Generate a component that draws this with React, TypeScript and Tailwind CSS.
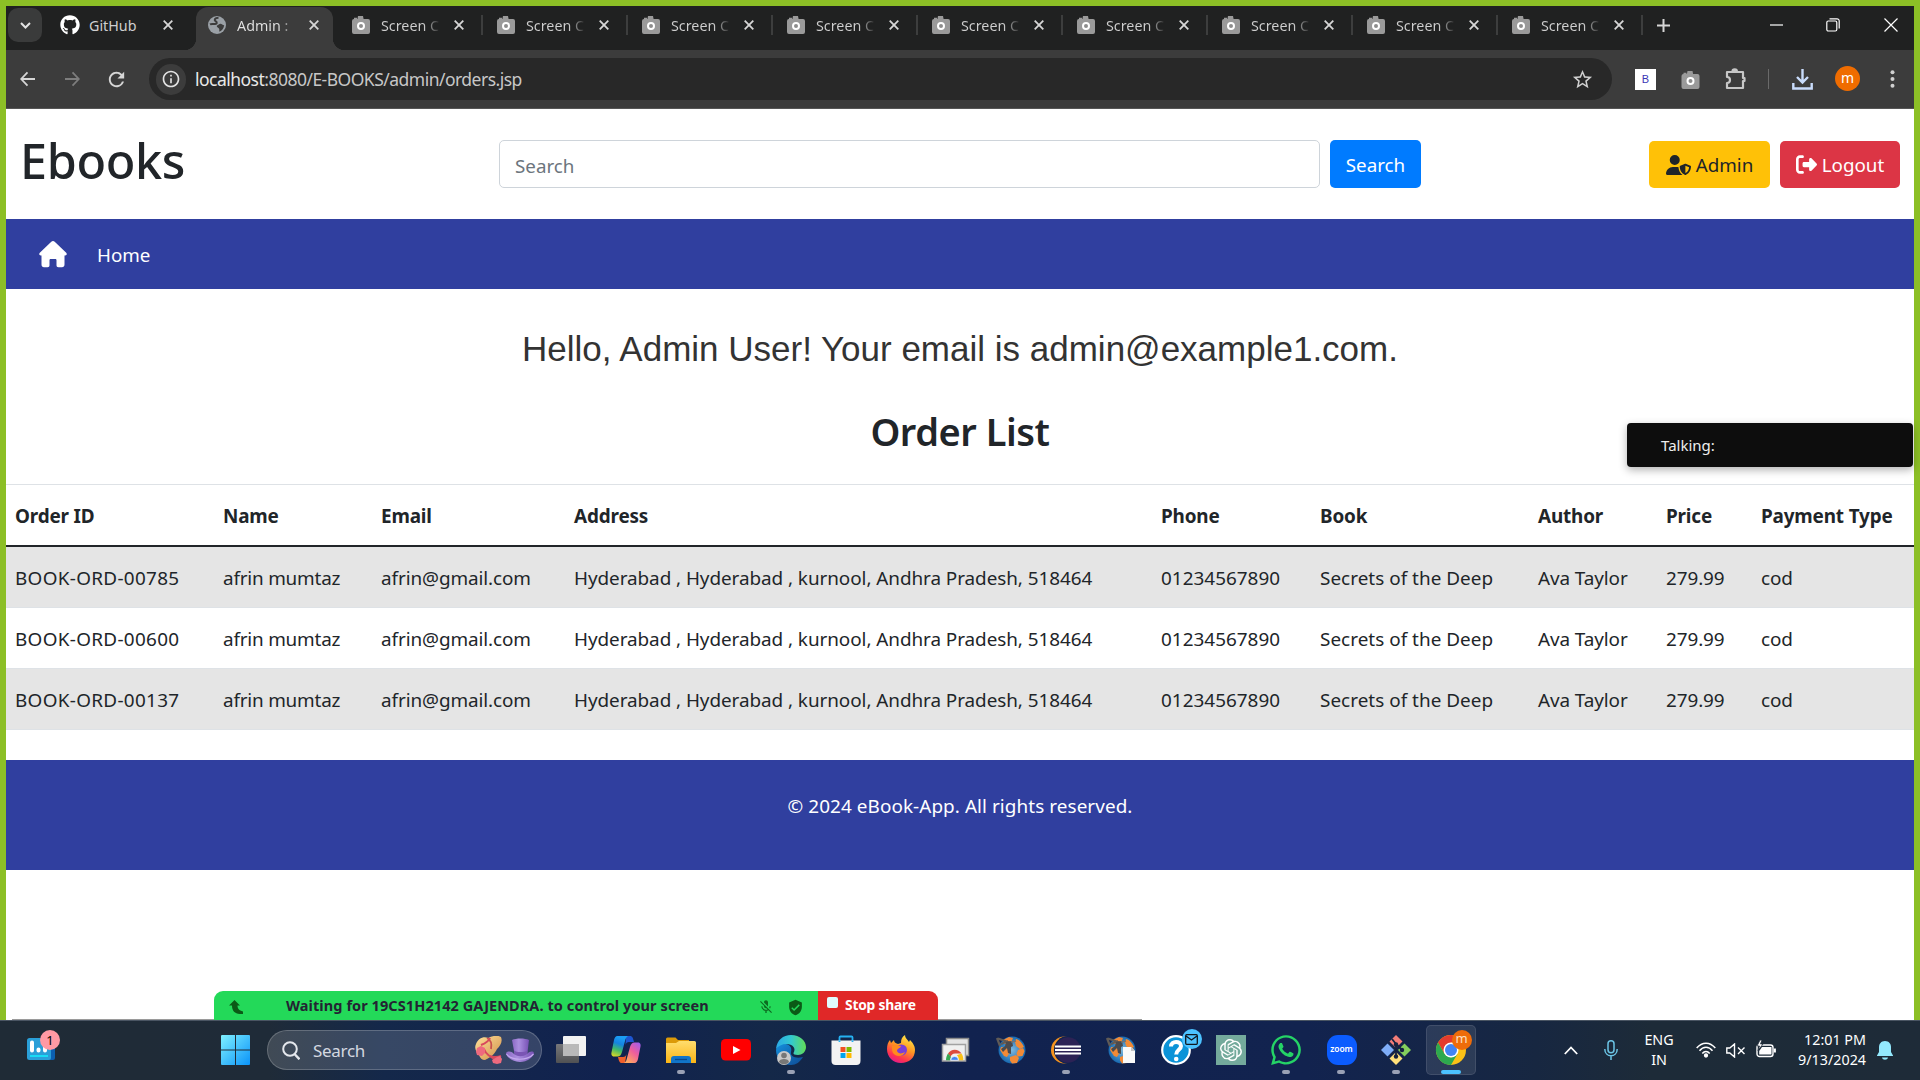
import React from "react";
import { FaGithub, FaWhatsapp, FaUserShield, FaRightFromBracket } from "react-icons/fa6";
import { SiOpenai } from "react-icons/si";
import { MdInfoOutline, MdStarOutline, MdVerifiedUser, MdMicOff, MdRefresh } from "react-icons/md";

type P = { className?: string; children?: React.ReactNode };

const Close = ({ className = "" }: P) => (
  <svg className={`h-[10px] w-[10px] shrink-0 ${className}`} viewBox="0 0 10 10" stroke="#d6d6d6" strokeWidth="1.8">
    <path d="M.7.7l8.6 8.6M9.3.7L.7 9.3" />
  </svg>
);

const Camera = ({ className = "" }: P) => (
  <svg className={`shrink-0 ${className}`} viewBox="0 0 18 18">
    <path d="M6 0h5l.6 3H16a2 2 0 0 1 2 2v11a2 2 0 0 1-2 2H2a2 2 0 0 1-2-2V5a2 2 0 0 1 2-2h0V1.8h3V3h.4z" fill="#9a9a9a" />
    <circle cx="9" cy="10" r="3" fill="#8d8d8d" stroke="#fff" strokeWidth="2" />
  </svg>
);

const Globe = () => (
  <svg className="h-[18px] w-[18px] shrink-0" viewBox="0 0 18 18">
    <circle cx="9" cy="9" r="9" fill="#9aa0a6" />
    <path d="M10.500 1.800C6.500 2 6 4 7.500 5.200c2 1.200 1.500 2.600-.3 2.800-1.800.2-3.600-.6-5.200.4" fill="none" stroke="#3c3c3c" strokeWidth="2" />
    <path d="M9 9.500c2-.8 2.600-2 4.200-1.600 1.400.4 1.600 1.400 3 1.200-.2 3.500-2.400 5.600-4.700 6.600-.6-1.500.4-2.500-.8-3.500-1.200-.8-2.500-1.400-1.700-2.700z" fill="#3c3c3c" />
  </svg>
);

const ScreenTab = () => (
  <div className="flex h-full w-[145px] shrink-0 items-center pl-[14px]">
    <Camera className="h-[20px] w-[18px]" />
    <span className="mt-[2px] ml-[11px] w-[61px] bg-gradient-to-r from-[#cfcfcf] from-70% to-transparent to-98% bg-clip-text text-[14.3px] whitespace-nowrap text-transparent">
      Screen C
    </span>
    <Close className="ml-[12px]" />
    <span className="ml-auto h-[20px] w-[2px] bg-[#3d3e3e]" />
  </div>
);

const TabStrip = () => (
  <div className="flex h-[44px] shrink-0 items-center bg-[#202121] pl-[2px]">
    <div className="mb-[6px] flex h-[34px] w-[34px] items-center justify-center rounded-[10px] bg-[#3a3b3b]">
      <svg className="h-[7px] w-[11px]" viewBox="0 0 11 7" fill="none" stroke="#e3e3e3" strokeWidth="2">
        <path d="M1 1l4.500 4.500L10 1" />
      </svg>
    </div>
    <div className="mb-[6px] flex h-[38px] w-[154px] items-center pl-[18px]">
      <FaGithub className="h-[20px] w-[20px] text-white" />
      <span className="mt-[2px] ml-[9px] text-[14.3px] text-[#cfcfcf]">GitHub</span>
      <Close className="ml-[27px]" />
    </div>
    <div className="relative flex h-full w-[137px] items-center">
      <div className="absolute right-0 bottom-0 left-0 h-[43px] rounded-t-[12px] bg-[#3c3c3c]" />
      <div className="absolute bottom-0 -left-3 h-3 w-3 bg-[radial-gradient(circle_at_0_0,transparent_12px,#3c3c3c_12.500px)]" />
      <div className="absolute -right-3 bottom-0 h-3 w-3 bg-[radial-gradient(circle_at_100%_0,transparent_12px,#3c3c3c_12.500px)]" />
      <div className="relative mb-[6px] flex items-center pl-[12px]">
        <Globe />
        <span className="mt-[2px] ml-[11px] w-[60px] bg-gradient-to-r from-[#e3e3e3] from-70% to-transparent to-100% bg-clip-text text-[14.3px] whitespace-nowrap text-transparent">
          Admin :
        </span>
        <Close className="ml-[12px]" />
      </div>
    </div>
    <div className="mb-[6px] ml-[5px] flex h-full items-center">
      {Array.from({ length: 9 }, (_, i) => (
        <ScreenTab key={i} />
      ))}
    </div>
    <svg className="mb-[6px] ml-[14px] h-[13px] w-[13px]" viewBox="0 0 13 13" stroke="#d6d6d6" strokeWidth="2">
      <path d="M6.500 0v13M0 6.500h13" />
    </svg>
    <div className="mb-[7px] ml-auto flex items-center pr-[16px]">
      <svg className="h-[14px] w-[13px]" viewBox="0 0 13 14" stroke="#fff" strokeWidth="1.200">
        <path d="M0 7h13" />
      </svg>
      <svg className="ml-[43px] h-[14px] w-[14px]" viewBox="0 0 14 14" fill="none" stroke="#fff" strokeWidth="1.200">
        <rect x=".8" y="3" width="10" height="10" rx="1.500" />
        <path d="M3.500.800h7.500a2.200 2.200 0 0 1 2.200 2.200v7.500" />
      </svg>
      <svg className="ml-[44px] h-[14px] w-[14px]" viewBox="0 0 14 14" stroke="#fff" strokeWidth="1.200">
        <path d="M.5.5l13 13M13.500.5l-13 13" />
      </svg>
    </div>
  </div>
);

const Toolbar = () => (
  <div className="flex h-[59px] shrink-0 items-center border-b border-[#565656] bg-[#3c3c3c] pl-[14px]">
    <svg className="h-[16px] w-[15px]" viewBox="0 0 16 16" fill="none" stroke="#d6d6d6" strokeWidth="1.900">
      <path d="M16 8H1.500M8 1L1.300 8 8 15" />
    </svg>
    <svg className="ml-[30px] h-[16px] w-[15px]" viewBox="0 0 16 16" fill="none" stroke="#7d7d7d" strokeWidth="1.900">
      <path d="M0 8h14.500M8 1l6.700 7L8 15" />
    </svg>
    <MdRefresh className="ml-[25px] h-[23px] w-[23px] text-[#d6d6d6]" />
    <div className="ml-[21px] flex h-[42px] w-[1463px] items-center rounded-full bg-[#282828] pl-[7px]">
      <div className="flex h-[31px] w-[30px] items-center justify-center rounded-full bg-[#3c3c3c]">
        <MdInfoOutline className="h-[20px] w-[20px] text-[#e3e3e3]" />
      </div>
      <span className="mt-px ml-[9px] text-[17.500px] tracking-[-0.520px] text-[#c7c7c7]">
        <span className="text-[#e8e8e8]">localhost</span>:8080/E-BOOKS/admin/orders.jsp
      </span>
      <MdStarOutline className="mr-[18px] ml-auto h-[23px] w-[23px] text-[#d0d0d0]" />
    </div>
    <div className="ml-[23px] flex h-[21px] w-[21px] items-center justify-center bg-white font-['Liberation_Sans'] text-[11px] text-[#3a35b5]">B</div>
    <Camera className="mt-[2px] ml-[25px] h-[18px] w-[19px]" />
    <svg className="ml-[25px] h-[22px] w-[22px]" viewBox="0 0 22 22" fill="none" stroke="#c7c7c7" strokeWidth="2.200" strokeLinejoin="round">
      <path d="M2 4h16v6h1.500v3H18v7H2v-5c4 0 4-6 0-6z" />
      <path d="M7.500 3.500a2.200 2.200 0 0 1 4.400 0" fill="#c7c7c7" />
    </svg>
    <span className="ml-[21px] h-[20px] w-px bg-[#6a6a6a]" />
    <svg className="ml-[23px] h-[21px] w-[21px]" viewBox="0 0 21 21" fill="none" stroke="#c9dcfb" strokeWidth="2.400">
      <path d="M10.500 0v13M5 8l5.500 5.500L16 8M1.300 14v5.500h18.400V14" />
    </svg>
    <div className="mb-[2px] ml-[22px] flex h-[25px] w-[25px] items-center justify-center rounded-full bg-[#ef6c00] pb-[2px] text-[14px] text-white">m</div>
    <svg className="ml-[30px] h-[18px] w-[5px]" viewBox="0 0 5 18" fill="#d0d0d0">
      <circle cx="2.500" cy="2.200" r="2" />
      <circle cx="2.500" cy="9" r="2" />
      <circle cx="2.500" cy="15.800" r="2" />
    </svg>
  </div>
);

const PageHeader = () => (
  <div className="flex h-[110px] shrink-0 items-start">
    <h1 className="mt-[16px] w-[493px] pl-[14px] text-[48.500px] leading-[70px] font-medium tracking-[-0.350px]">Ebooks</h1>
    <div className="mt-[31px] flex h-[48px] w-[821px] items-center rounded-[5px] border border-[#ced4da] pt-[4px] pl-[15px] text-[18.800px] text-[#6c757d]">Search</div>
    <div className="mt-[31px] ml-[10px] flex h-[48px] w-[91px] items-center justify-center rounded-[5px] bg-[#007bff] pt-[2px] text-[18.800px] text-white">Search</div>
    <div className="mt-[32px] ml-[228px] flex h-[47px] w-[121px] items-center justify-center gap-[5px] rounded-[5px] bg-[#ffc107] text-[18.800px]">
      <FaUserShield className="h-[20px] w-[25px]" />
      <span className="mt-[2px]">Admin</span>
    </div>
    <div className="mt-[32px] ml-[10px] flex h-[47px] w-[120px] items-center justify-center gap-[5px] rounded-[5px] bg-[#dc3545] text-[18.800px] text-white">
      <FaRightFromBracket className="h-[21px] w-[21px]" />
      <span className="mt-[2px]">Logout</span>
    </div>
  </div>
);

const Nav = () => (
  <div className="flex h-[70px] shrink-0 items-center bg-[#303f9f] pl-[32px] text-[18.800px] text-white">
    <svg className="h-[28px] w-[30px]" viewBox="0 0 30 28" fill="#fff">
      <path d="M15 1c.7 0 1.200.3 1.700.8l11.500 11c1.200 1.200.4 2.700-1 2.700H26.500v9c0 1.700-1 2.700-2.500 2.700h-3.500c-1.400 0-2-.8-2-2v-5c0-.8-.5-1.200-1.200-1.200h-4.600c-.7 0-1.200.4-1.200 1.200v5c0 1.200-.6 2-2 2H6c-1.500 0-2.500-1-2.500-2.700v-9H2.800c-1.400 0-2.200-1.500-1-2.700l11.500-11c.5-.5 1-.8 1.700-.8z" />
    </svg>
    <span className="mt-[2px] ml-[29px]">Home</span>
  </div>
);

const rows = ["BOOK-ORD-00785", "BOOK-ORD-00600", "BOOK-ORD-00137"];
const cols = "grid grid-cols-[208px_158px_193px_587px_159px_218px_128px_95px_1fr] items-center pl-[9px] whitespace-nowrap";

const Table = () => (
  <div className="text-[18.900px] tracking-[-0.090px]">
    <div className={`${cols} h-[63px] border-t border-b-2 border-t-[#dee2e6] border-b-[#212529] pt-[2px] font-bold tracking-[-0.160px]`}>
      {["Order ID", "Name", "Email", "Address", "Phone", "Book", "Author", "Price", "Payment Type"].map((h) => (
        <span key={h}>{h}</span>
      ))}
    </div>
    {rows.map((id, i) => (
      <div key={id} className={`${cols} h-[61px] border-b border-[#dee2e6] pt-[2px] ${i % 2 === 0 ? "bg-[#e5e5e5]" : "bg-white"}`}>
        <span className="tracking-[0.320px]">{id}</span>
        <span className="tracking-[-0.200px]">afrin mumtaz</span>
        <span>afrin@gmail.com</span>
        <span className="tracking-[-0.060px]">Hyderabad , Hyderabad , kurnool, Andhra Pradesh, 518464</span>
        <span className="tracking-[0.020px]">01234567890</span>
        <span className="tracking-[0.030px]">Secrets of the Deep</span>
        <span>Ava Taylor</span>
        <span>279.99</span>
        <span>cod</span>
      </div>
    ))}
  </div>
);

const ShareBar = () => (
  <div className="absolute top-[991px] left-[214px] flex h-[29px] w-[724px] overflow-hidden rounded-t-[9px] text-[14.500px] font-bold">
    <div className="flex w-[604px] items-center bg-[#23d959] pl-[15px] text-[#232333]">
      <svg className="mt-[2px] h-[14px] w-[14px]" viewBox="0 0 14 14" fill="#0b5a16">
        <path d="M5.500 0L11 5.500H8.500c0 3 1.500 5 5.500 6v2.500C7 14.500 3 12 3 5.500H0z" />
      </svg>
      <span className="ml-[43px] w-[424px] tracking-[0.080px] whitespace-nowrap">Waiting for 19CS1H2142 GAJENDRA. to control your screen</span>
      <MdMicOff className="mt-[3px] ml-[48px] h-[16px] w-[16px] shrink-0 text-[#0d6b20]" />
      <MdVerifiedUser className="mt-[3px] ml-[13px] h-[17px] w-[17px] shrink-0 text-[#0b5a16]" />
    </div>
    <div className="flex flex-1 items-center bg-[#e02828] pl-[9px] text-white">
      <span className="mb-[6px] h-[11px] w-[11px] rounded-[2px] bg-[#e0fbff]" />
      <span className="ml-[7px] text-[13.800px] tracking-[-0.200px] whitespace-nowrap">Stop share</span>
    </div>
  </div>
);

const TaskIcon = ({ children, bar = false, active = false }: { children: React.ReactNode; bar?: boolean; active?: boolean }) => (
  <div className="flex h-[60px] w-[55px] items-center justify-center">
    <div className={`relative flex h-[50px] w-[50px] items-center justify-center rounded-[5px] ${active ? "border border-white/10 bg-white/10" : ""}`}>
      {children}
      {bar && <span className="absolute bottom-[1px] h-[4px] w-[8px] rounded-full bg-[#9aa1b5]" />}
      {active && <span className="absolute bottom-0 h-[4px] w-[20px] rounded-full bg-[#4cc2ff]" />}
    </div>
  </div>
);

const Badge = ({ className = "", children }: P) => (
  <span className={`absolute top-[4px] flex h-[20px] w-[20px] items-center justify-center rounded-full ${className}`}>{children}</span>
);

const Svg = ({ children }: P) => (
  <svg className="h-[30px] w-[30px] overflow-visible" viewBox="0 0 30 30">
    {children}
  </svg>
);

const ChromeMark = () => (
  <>
    <circle cx="15" cy="15" r="15" fill="#fbc116" />
    <path d="M15 0A15 15 0 0 1 28 7.500H15L8.500 18.800 2 7.500A15 15 0 0 1 15 0z" fill="#e33b2e" />
    <path d="M2 7.500l6.500 11.300L15 22.500l6.500-3.700L15 30A15 15 0 0 1 2 7.500z" fill="#2da94f" />
    <circle cx="15" cy="15" r="7.500" fill="#fff" />
    <circle cx="15" cy="15" r="6" fill="#4285f4" />
  </>
);

const Ball = () => (
  <>
    <circle cx="16" cy="15" r="13.500" fill="url(#ballBlue)" />
    <path d="M7 5l6-3 4 1-2 5-7 1zM20 4c4 1 6 4 8 8l-4 2-4-3-1-4zM5 12l6 1 3 4-3 5-3-1-4-6zM14 22l6-2 3 3-2 5-5 .500-2-3zM22 15l5-2 1.500 3-2 5-5 .500-1-3z" fill="#f28a36" />
    <path d="M1 3l3 8M2 3.500L15 8M5 9l7-3" fill="none" stroke="#5f5a56" strokeWidth="2.200" />
    <path d="M10 7l6-1 1 5-2 1v7l-3-1-1-5-4 4-2-3 4-3z" fill="#4a4a4d" />
    <path d="M15 7l5-1" stroke="#77736e" strokeWidth="1.500" />
  </>
);

const Defs = () => (
  <svg className="absolute h-0 w-0">
    <defs>
      <linearGradient id="win" x1="0" y1="0" x2="1" y2="1">
        <stop offset="0" stopColor="#7ff0ff" />
        <stop offset="1" stopColor="#0a93f8" />
      </linearGradient>
      <radialGradient id="ballBlue">
        <stop offset="0" stopColor="#7fb9de" />
        <stop offset="1" stopColor="#1769b0" />
      </radialGradient>
      <linearGradient id="cpl" x1=".3" y1="0" x2="0" y2="1">
        <stop offset="0" stopColor="#1b9df5" />
        <stop offset=".3" stopColor="#1583e0" />
        <stop offset=".6" stopColor="#3fb96a" />
        <stop offset="1" stopColor="#f2dc1c" />
      </linearGradient>
      <linearGradient id="cpr" x1="1" y1="0" x2=".3" y2="1">
        <stop offset="0" stopColor="#9a5cf5" />
        <stop offset=".5" stopColor="#ee5d9d" />
        <stop offset="1" stopColor="#ffa860" />
      </linearGradient>
      <linearGradient id="fold" x1="0" y1="0" x2="0" y2="1">
        <stop offset="0" stopColor="#ffdd6e" />
        <stop offset="1" stopColor="#fcb514" />
      </linearGradient>
      <linearGradient id="edgeTop" x1="0" y1="0" x2="1" y2="0">
        <stop offset="0" stopColor="#2aa8e6" />
        <stop offset=".5" stopColor="#33c9d0" />
        <stop offset="1" stopColor="#62dc56" />
      </linearGradient>
      <linearGradient id="edgeLow" x1="0" y1="0" x2="1" y2="1">
        <stop offset="0" stopColor="#1590dd" />
        <stop offset="1" stopColor="#0e4a94" />
      </linearGradient>
      <linearGradient id="fox" x1=".8" y1="0" x2=".3" y2="1">
        <stop offset="0" stopColor="#fff04a" />
        <stop offset=".45" stopColor="#ff9722" />
        <stop offset=".8" stopColor="#ff3250" />
        <stop offset="1" stopColor="#e01a8e" />
      </linearGradient>
      <linearGradient id="straw" x1="0" y1="0" x2="1" y2="1">
        <stop offset="0" stopColor="#ffe09a" />
        <stop offset="1" stopColor="#d1914a" />
      </linearGradient>
      <linearGradient id="hat" x1="0" y1="0" x2="1" y2="0">
        <stop offset="0" stopColor="#8a68c4" />
        <stop offset=".4" stopColor="#ab8fe0" />
        <stop offset="1" stopColor="#7650b4" />
      </linearGradient>
      <linearGradient id="tvBack" x1="0" y1="0" x2="0" y2="1">
        <stop offset="0" stopColor="#76777a" />
        <stop offset="1" stopColor="#505153" />
      </linearGradient>
    </defs>
  </svg>
);

const Taskbar = () => (
  <div className="flex h-[60px] shrink-0 items-center border-t border-[#4a5563] bg-[linear-gradient(90deg,#1f2b36_0%,#1f2b38_14%,#14284a_20%,#11224f_32%,#142848_40%,#11224f_50%,#12234f_68%,#172741_80%,#1d2b38_86%,#1e2b38_100%)] pb-px">
    <Defs />
    <div className="relative ml-[27px] h-[24px] w-[27px]">
      <svg className="h-[22px] w-[28px]" viewBox="0 0 28 22">
        <rect x="4" y="1" width="24" height="21" rx="2" fill="#0b5fb0" />
        <rect width="24" height="22" rx="2.500" fill="#2a9fd8" />
        <path d="M5 4.500v8M11.500 11.500v1M18 8v4.500" stroke="#fff" strokeWidth="4" strokeLinecap="round" />
        <path d="M3 18h18" stroke="#18dcf5" strokeWidth="2" />
      </svg>
      <span className="absolute -top-[8px] left-[13px] flex h-[20px] w-[20px] items-center justify-center rounded-full bg-[#ff99a4] pt-px text-[13px] text-black">1</span>
    </div>
    <svg className="ml-[167px] h-[30px] w-[29px]" viewBox="0 0 29 29" fill="url(#win)" preserveAspectRatio="none">
      <path d="M1 0H14V14H0V1a1 1 0 0 1 1-1zM15 0h13a1 1 0 0 1 1 1v13H15zM0 15h14v14H1a1 1 0 0 1-1-1zM15 15h14v13a1 1 0 0 1-1 1H15z" />
    </svg>
    <div className="ml-[17px] flex h-[40px] w-[275px] items-center rounded-full border border-white/20 bg-white/15 pl-[14px]">
      <svg className="h-[19px] w-[18px]" viewBox="0 0 18 19" fill="none" stroke="#e4e7ec" strokeWidth="2">
        <circle cx="8" cy="8" r="6.800" />
        <path d="M12.500 13l5 5.300" strokeWidth="2.400" />
      </svg>
      <span className="mt-px ml-[13px] text-[17px] tracking-[-0.3px] text-[#d4d8e0]">Search</span>
      <svg className="mr-px ml-auto h-[29px] w-[28px]" viewBox="0 0 28 29">
        <path d="M1 8C3 3 8 0 13 2c5-2.500 10-3 13-1 2 5-1 9-4 12-2 4-5 8-12 11-3 0-5-2-6-5C1 16-1 12 1 8z" fill="url(#straw)" />
        <path d="M12 2c4 2 5 6 4 11" fill="none" stroke="#c9524e" strokeWidth="1.800" />
        <path d="M6 9c5-2 8-4 9-7M9 13c2 6 7 9 15 12M15 20c4 1 6 2 11 0" fill="none" stroke="#d8485c" strokeWidth="2" />
        <path d="M2 12l4-2 4 2 0 5-3 3-5-1-1-3zM17 24l5-3 3-1 2 3-1 4-4 1-4-1z" fill="#ee6a7e" />
      </svg>
      <svg className="mr-[7px] ml-[2px] h-[24px] w-[28px]" viewBox="0 0 28 24">
        <path d="M6 2c4-2 13-2 17 0l-2 16c-3 2-9 2-12 0z" fill="url(#hat)" />
        <path d="M8 12.500c3 2 10 2 13.500 0l-.7 6c-4 2-8 2-12 0z" fill="#7a55b4" />
        <path d="M0 15c2-2 5-2 8 1 4 3 9 3 13 0 3-3 6-3 7-1 0 4-7 9-14 9S0 19 0 15z" fill="url(#hat)" />
        <path d="M.500 16c5 7 21 7 27 0" fill="none" stroke="#c3abed" strokeWidth="1.200" />
      </svg>
    </div>
    <div className="ml-px flex">
      <TaskIcon>
        <Svg>
          <rect x="0" y="9" width="23" height="19" rx="1" fill="url(#tvBack)" />
          <rect x="7" y="1" width="23" height="20" rx="1" fill="#f2f2f2" />
          <path d="M7 9h16v12H7z" fill="#b9b9b9" />
        </Svg>
      </TaskIcon>
      <TaskIcon>
        <Svg>
          <path d="M15 1h4c2.500 0 3 2 4 6h-5c-2 0-3 1-3.500 3z" fill="#1d55d0" />
          <path d="M14 28h-3c-2.500 0-3-2-4-6h5c2 0 3-1 3.500-3z" fill="#f0602c" />
          <path d="M6.500 1H17c-2 1-2.500 3-3 5l-3 11c-1 3-2 4.500-4.500 4.500H3C.5 21.500 0 19 .6 17L3 5c.5-2 1.500-4 3.500-4z" fill="url(#cpl)" />
          <path d="M23.500 28H13c2-1 2.500-3 3-5l3-11c1-3 2-4.500 4.500-4.500H27c2.500 0 3 2.500 2.400 4.500L27 24c-.5 2-1.500 4-3.500 4z" fill="url(#cpr)" />
        </Svg>
      </TaskIcon>
      <TaskIcon bar>
        <Svg>
          <path d="M0 4a1.500 1.500 0 0 1 1.500-1.500h8L12 5h11v6H0z" fill="#dc9a08" />
          <path d="M0 8h10l3-2h15.500A1.500 1.500 0 0 1 30 7.500V28H0z" fill="url(#fold)" />
          <path d="M5 28v-4c0-2 1-3 3-3h14c2 0 3 1 3 3v4z" fill="#1175c9" />
          <path d="M9 24.500h12" stroke="#07498d" strokeWidth="1.300" />
        </Svg>
      </TaskIcon>
      <TaskIcon>
        <Svg>
          <rect y="4" width="30" height="21.500" rx="4.500" fill="#f00" />
          <path d="M12 11v8l7.500-4z" fill="#fff" />
        </Svg>
      </TaskIcon>
      <TaskIcon bar>
        <Svg>
          <path d="M0 15C1 10 6 8 10 9c5 1 6 5 5 8-1 4 4 7 12 5-3 5-7 8-12 8C6 30 0 23 0 15z" fill="url(#edgeLow)" />
          <path d="M0 14C1 5 7 0 15 0c9 0 15 6 15 12 0 5-4 8-8 8-3 0-5-1-4.500-2 3-5-1-9-7-9C6 9 2 11 0 14z" fill="url(#edgeTop)" />
          <circle cx="8" cy="23" r="7" fill="#c9c9c9" />
          <circle cx="8" cy="20.500" r="2.800" fill="#777" />
          <path d="M3 27c0-4 10-4 10 0-2 3-8 3-10 0z" fill="#777" />
        </Svg>
      </TaskIcon>
      <TaskIcon>
        <Svg>
          <path d="M8.500 7V2.500c0-.6.400-1 1-1h11c.6 0 1 .4 1 1V7" fill="none" stroke="#25b1f2" strokeWidth="1.800" />
          <path d="M.5 5.500h29v20.500c0 2.500-1.500 4-4 4h-21c-2.500 0-4-1.500-4-4z" fill="#f3f3f3" />
          <path d="M8.500 5.500v1.500M21.500 5.500v1.500" stroke="#25b1f2" strokeWidth="1.800" />
          <path d="M9.500 12h5v5h-5z" fill="#f25022" />
          <path d="M15.500 12h5v5h-5z" fill="#7fba00" />
          <path d="M9.500 18h5v5h-5z" fill="#00a4ef" />
          <path d="M15.500 18h5v5h-5z" fill="#ffb900" />
        </Svg>
      </TaskIcon>
      <TaskIcon>
        <Svg>
          <path d="M1 14c0-4 1-7 3-9l1 3 3-3c0 2 1 3 4 4l3-1c0-4 1-6 4-8 0 3 2 4 4 7l1-2c4 4 5 7 5 10 0 8-6 13-14 13S1 22 1 14z" fill="url(#fox)" />
          <circle cx="15.500" cy="15" r="5.500" fill="#7a3fd8" />
          <path d="M6 11c3-2 6 0 9 0-1 3-4 2-4 5 1 3 5 3 8 1-2 5-9 5-12 1-1-2-1-4-1-7z" fill="#ff8b1e" />
        </Svg>
      </TaskIcon>
      <TaskIcon>
        <Svg>
          <rect x="5.500" y="3.500" width="22" height="17" fill="#e5e5e5" stroke="#8b8b8b" strokeWidth="1.500" />
          <rect x="1.500" y="9.500" width="23" height="16.500" fill="#f0f0f0" stroke="#a2a2a2" strokeWidth="1.500" />
          <path d="M7 18.500a8 8 0 0 1 13.500 0H14a5 5 0 0 0-4.500 3.500z" fill="#dd4b3e" />
          <path d="M5 25.300c0-2.500.7-5 2-6.800L10 22c-.7 1-.7 2-.7 3.300z" fill="#36a852" />
          <path d="M20.500 18.500c1.300 2 2 4.500 1.800 6.800h-4.600c0-2.500-.5-4-2-5z" fill="#fbc116" />
          <path d="M9.700 25.300a3.900 3.900 0 0 1 7.800 0z" fill="#4285f4" stroke="#fff" strokeWidth=".7" />
        </Svg>
      </TaskIcon>
      <TaskIcon>
        <Svg>
          <Ball />
        </Svg>
      </TaskIcon>
      <TaskIcon bar>
        <Svg>
          <circle cx="13.500" cy="15" r="13.500" fill="#f7941e" />
          <circle cx="16.800" cy="15" r="13.900" fill="#11224f" />
          <circle cx="17" cy="15" r="12.800" fill="#2c2255" />
          <path d="M4 11.500h26M4 15h26M4 18.500h26" stroke="#fff" strokeWidth="1.900" />
        </Svg>
      </TaskIcon>
      <TaskIcon>
        <Svg>
          <Ball />
          <path d="M17 12h8l4 4v12H17z" fill="#fafafa" />
          <path d="M25 12v4h4z" fill="#c5c5c5" />
        </Svg>
      </TaskIcon>
      <TaskIcon>
        <Svg>
          <circle cx="15" cy="15" r="13.800" fill="#0b93d8" stroke="#fff" strokeWidth="2.200" />
          <path d="M10 11.500c0-6 10-6 10-.5 0 4-4.800 3.500-4.800 8.500" fill="none" stroke="#fff" strokeWidth="4" />
          <circle cx="15.200" cy="24" r="2.300" fill="#fff" />
        </Svg>
        <Badge className="-right-px bg-[#4cc2ff]">
          <svg className="h-[11px] w-[13px]" viewBox="0 0 13 11" fill="none" stroke="#101820" strokeWidth="1.300">
            <rect x=".7" y=".7" width="11.600" height="9.600" rx="1" />
            <path d="M1 2l5.500 4L12 2" />
          </svg>
        </Badge>
      </TaskIcon>
      <TaskIcon>
        <div className="flex h-[30px] w-[30px] items-center justify-center bg-[#74aa9c]">
          <SiOpenai className="h-[22px] w-[22px] text-white" />
        </div>
      </TaskIcon>
      <TaskIcon bar>
        <FaWhatsapp className="h-[34px] w-[34px] text-[#25d366]" />
      </TaskIcon>
      <TaskIcon bar>
        <div className="ml-[2px] flex h-[30px] w-[30px] items-center justify-center rounded-[11px] bg-[#0b5cff] pb-[2px] text-[8.500px] font-semibold tracking-[-0.1px] text-white">zoom</div>
      </TaskIcon>
      <TaskIcon bar>
        <Svg>
          <path d="M15 0l6.500 6.500L15 13 8.500 6.500z" fill="#f37d78" />
          <path d="M6.500 8.500L13 15l-6.500 6.500L0 15z" fill="#7fadf7" />
          <path d="M23.500 8.500L30 15l-6.500 6.500L17 15z" fill="#84cf5c" />
          <path d="M15 17l6.500 6.500L15 30l-6.500-6.500z" fill="#ffe07a" />
          <path d="M11 4l4 5v13M15 9l6 6" fill="none" stroke="#14213f" strokeWidth="1.800" />
          <circle cx="15" cy="9.500" r="2.200" fill="#14213f" />
          <circle cx="15" cy="21.500" r="2.200" fill="#14213f" />
          <circle cx="21" cy="15" r="2.200" fill="#14213f" />
        </Svg>
      </TaskIcon>
      <TaskIcon active>
        <Svg>
          <ChromeMark />
        </Svg>
        <Badge className="right-[3px] bg-[#ee6c0a] pb-[2px] text-[13px] text-[#ffe0c4]">m</Badge>
      </TaskIcon>
    </div>
    <div className="ml-auto flex items-center pr-[27px] text-white">
      <svg className="h-[9px] w-[14px]" viewBox="0 0 14 9" fill="none" stroke="#fff" strokeWidth="1.800">
        <path d="M.8 8L7 1.500 13.200 8" />
      </svg>
      <svg className="ml-[26px] h-[20px] w-[14px]" viewBox="0 0 14 20" fill="none" stroke="#6cc5e6" strokeWidth="1.500">
        <rect x="4" y=".8" width="6" height="12" rx="3" />
        <path d="M.8 9c0 9 12.400 9 12.400 0M7 16v4" />
      </svg>
      <div className="ml-[24px] w-[34px] text-center text-[14.300px] leading-[20px]">
        ENG
        <br />
        IN
      </div>
      <svg className="ml-[20px] h-[16px] w-[20px]" viewBox="0 0 20 16" fill="none" stroke="#fff" strokeWidth="1.500">
        <path d="M.7 6C6-.5 14-.5 19.300 6M3.500 8.800c3.700-4.800 9.300-4.800 13 0M6.300 11.500c2.200-2.800 5.200-2.800 7.400 0" />
        <circle cx="10" cy="13.500" r="1.400" fill="#fff" />
      </svg>
      <svg className="ml-[10px] h-[15px] w-[20px]" viewBox="0 0 20 15" fill="none" stroke="#fff" strokeWidth="1.400">
        <path d="M.8 5h3L8.500 1v13L3.800 10h-3zM12 4.500l6.500 6.500M18.500 4.500L12 11" />
      </svg>
      <svg className="mb-[3px] ml-[10px] h-[18px] w-[20px]" viewBox="0 0 20 18" fill="none" stroke="#fff" strokeWidth="1.400">
        <rect x="1" y="5" width="16" height="11.500" rx="2.500" />
        <path d="M6 7h9.500v7.500H3.200V11z" fill="#fff" stroke="none" />
        <path d="M18.800 8.500v4" strokeWidth="2.200" />
        <path d="M4 0L1 6h2.500L2 10.500 7 4H4.500L6 0z" fill="#fff" stroke="#1e2b38" strokeWidth=".8" />
      </svg>
      <div className="ml-[17px] w-[73px] text-right text-[14.300px] leading-[20px] whitespace-nowrap">
        12:01 PM
        <br />
        9/13/2024
      </div>
      <svg className="ml-[11px] h-[19px] w-[16px]" viewBox="0 0 16 19" fill="#93e9fd">
        <path d="M8 0c4 0 6 3 6 6v5l2 3.500v.5H0v-.5L2 11V6c0-3 2-6 6-6zM5 16.500h6c-.5 3-5.500 3-6 0z" />
      </svg>
    </div>
  </div>
);

export default function App() {
  return (
    <div className="relative flex h-[1080px] w-[1920px] flex-col overflow-hidden bg-white font-['Noto_Sans',sans-serif] text-[#212529]">
      <div className="flex h-[1020px] shrink-0 flex-col border-x-[6px] border-t-[6px] border-[#8cbf26]">
        <TabStrip />
        <Toolbar />
        <PageHeader />
        <Nav />
        <p className="mt-[33px] text-center font-['Liberation_Sans',sans-serif] text-[35px] leading-[54px] text-[#333]">
          Hello, Admin User! Your email is admin@example1.com.
        </p>
        <h2 className="mt-[25px] mb-[23px] text-center text-[38px] leading-[60px] font-semibold tracking-[-0.450px]">Order List</h2>
        <Table />
        <footer className="mt-[30px] h-[110px] shrink-0 bg-[#303f9f] pt-[31px] text-center text-[18.900px] leading-[30px] tracking-[0.080px] text-white">
          © 2024 eBook-App. All rights reserved.
        </footer>
        <div className="mt-auto ml-[6px] h-px w-[1130px] bg-[#9a9a9a]" />
      </div>
      <div className="absolute top-[423px] left-[1627px] flex h-[44px] w-[286px] items-center rounded-[4px] bg-[#0d0d0d] pl-[34px] text-[15px] text-[#ededed] shadow-[0_3px_8px_rgba(0,0,0,0.3)]">
        Talking:
      </div>
      <ShareBar />
      <Taskbar />
    </div>
  );
}
